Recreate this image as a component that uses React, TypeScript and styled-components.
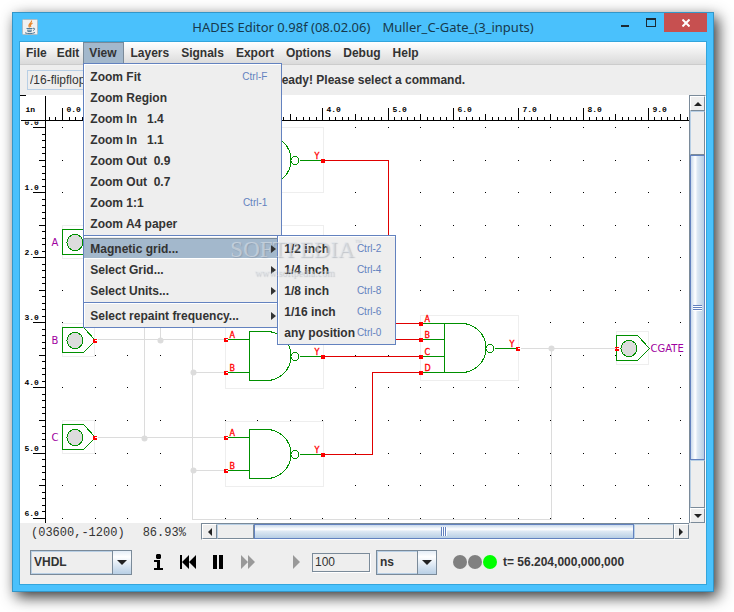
import React from "react";
import styled, { createGlobalStyle } from "styled-components";

const GlobalStyle = createGlobalStyle`
  * { box-sizing: border-box; }
  body { margin: 0; background: #fff; font-family: "Liberation Sans", Arial, sans-serif; font-size: 12px; color: #333; }
  button, input, select { font: inherit; color: inherit; margin: 0; padding: 0; border: 0; background: none; border-radius: 0; outline: none; }
`;

const BLUE = "#6382bf";
const STEEL = "#7a8a99";
const PALE = "#b8cfe5";
const GREEN = "#009000";
const RED = "#e00000";
const GREY = "#dcdcdc";

/* ---------- window frame ---------- */

const Desktop = styled.div`
  min-height: 100vh;
  display: flex;
  padding: 12px 20px 20px 12px;
  overflow: hidden;
`;

const Frame = styled.div`
  flex: 1;
  min-width: 0;
  display: flex;
  flex-direction: column;
  padding: 0 6px 6px;
  background: #4ac1fc;
  border: 1px solid #3396c8;
  box-shadow: 4px 5px 14px rgba(0, 0, 0, 0.8);
`;

const TitleBar = styled.header`
  height: 28px;
  display: grid;
  grid-template-columns: 1fr auto 1fr;
  align-items: center;
`;

const AppIcon = styled.svg`
  margin-left: 3px;
`;

const Title = styled.h1`
  margin: 0;
  display: flex;
  gap: 12px;
  font: 400 13px/28px "Noto Sans", "Open Sans", sans-serif;
  color: #17394c;
  white-space: nowrap;
`;

const WindowButtons = styled.div`
  align-self: start;
  justify-self: end;
  display: flex;
`;

const WindowButton = styled.button<{ $close?: boolean }>`
  width: ${(p) => (p.$close ? 43 : 26)}px;
  height: 19px;
  display: flex;
  align-items: center;
  justify-content: center;
  background: ${(p) => (p.$close ? "#c75050" : "transparent")};
`;

const Client = styled.div`
  flex: 1;
  min-height: 0;
  display: flex;
  flex-direction: column;
  background: #eee;
  border: 1px solid #33a5dc;
`;

/* ---------- menus ---------- */

const MenuBar = styled.nav`
  height: 23px;
  display: flex;
  border-bottom: 1px solid #ccc;
  background: linear-gradient(#fff, #dadada);
`;

const MenuSlot = styled.div`
  position: relative;
  display: flex;
`;

const MenuTitle = styled.button<{ $open?: boolean; $short?: boolean }>`
  height: 22px;
  padding: 0 ${(p) => (p.$open ? 8 : p.$short ? 4 : 6)}px 0 6px;
  font-weight: 700;
  line-height: 20px;
  background: ${(p) => (p.$open ? "#a3b8cc" : "transparent")};
  box-shadow: ${(p) => (p.$open ? `inset 1px 1px ${STEEL}, inset -1px 0 ${STEEL}` : "none")};
`;

const Popup = styled.div<{ $sub?: boolean }>`
  position: absolute;
  z-index: ${(p) => (p.$sub ? 3 : 2)};
  top: ${(p) => (p.$sub ? "-3px" : "21px")};
  left: ${(p) => (p.$sub ? "calc(100% - 4px)" : "0")};
  width: ${(p) => (p.$sub ? 119 : 199)}px;
  padding: 2px 0 1px;
  background: #eee;
  border: 1px solid ${BLUE};
  box-shadow: inset 1px 1px #fff;
`;

const ItemSlot = styled.div`
  position: relative;
`;

const Item = styled.button<{ $active?: boolean; $wide?: boolean }>`
  width: 100%;
  height: 21px;
  display: flex;
  align-items: center;
  justify-content: space-between;
  padding: 0 ${(p) => (p.$wide ? 5 : 14)}px 0 6px;
  font-weight: 700;
  text-align: left;
  white-space: pre;
  background: ${(p) => (p.$active ? "#a3b8cc" : "transparent")};
  border-top: 1px solid ${(p) => (p.$active ? STEEL : "transparent")};
  border-bottom: 1px solid ${(p) => (p.$active ? "#fff" : "transparent")};
`;

const Shortcut = styled.kbd`
  font: 400 10px "Liberation Sans", Arial, sans-serif;
  color: ${BLUE};
`;

const Separator = styled.hr`
  height: 2px;
  margin: 1px 0;
  border: 0;
  background: #fff;
  border-top: 1px solid ${BLUE};
`;

const Watermark = styled.div`
  position: absolute;
  z-index: 4;
  top: 194px;
  left: 147px;
  width: 132px;
  pointer-events: none;
  text-align: center;
  font-family: "Liberation Serif", serif;
  color: rgba(225, 230, 236, 0.55);
  text-shadow: 1px 1px 1px rgba(120, 130, 145, 0.4);
`;

const WatermarkName = styled.div`
  display: flex;
  font-size: 23px;
  line-height: 28px;
`;

const WatermarkMark = styled.sup`
  font-size: 7px;
  line-height: 12px;
`;

const WatermarkSite = styled.div`
  font-size: 10px;
  line-height: 18px;
  padding-right: 4px;
`;

/* ---------- tool bar ---------- */

const ToolBar = styled.div`
  height: 30px;
  display: flex;
  align-items: center;
  gap: 3px;
  padding: 0 7px;
`;

const PathField = styled.input`
  width: 243px;
  height: 20px;
  padding: 0 2px;
  border: 1px solid ${PALE};
`;

const Message = styled.output`
  font-weight: 700;
  white-space: nowrap;
`;

/* ---------- canvas and scroll bars ---------- */

const Workspace = styled.main`
  flex: 1;
  min-height: 300px;
  display: flex;
`;

const Drawing = styled.svg`
  flex: 1;
  min-width: 0;
  height: auto;
  background: #fff;
  overflow: hidden;
`;

const StatusRow = styled.div`
  height: 17px;
  display: flex;
  padding-right: 17px;
  font: 12px/20px "Liberation Mono", monospace;
`;

const Readout = styled.div`
  width: 181px;
  display: flex;
  gap: 18px;
  padding-left: 11px;
`;

const ScrollBar = styled.div<{ $vertical?: boolean }>`
  display: flex;
  flex-direction: ${(p) => (p.$vertical ? "column" : "row")};
  ${(p) =>
    p.$vertical
      ? `width: 17px; border-right: 1px solid #fff; border-left: 1px solid ${STEEL}; border-top: 1px solid ${STEEL};`
      : `flex: 1; min-width: 0; border-top: 1px solid ${STEEL}; border-left: 1px solid ${STEEL}; border-bottom: 1px solid #fff;`}
`;

const ScrollButton = styled.button`
  width: 15px;
  height: 15px;
  display: flex;
  align-items: center;
  justify-content: center;
  border: 1px solid ${STEEL};
  border-top-color: #fff;
  border-left-color: #fff;
`;

const Track = styled.div<{ $size: number }>`
  flex: ${(p) => p.$size} 1 0;
  border: 1px solid ${STEEL};
  border-top-color: ${PALE};
  border-left-color: ${PALE};
`;

const Thumb = styled.div<{ $size: number; $vertical?: boolean }>`
  flex: ${(p) => p.$size} 1 0;
  display: flex;
  align-items: center;
  justify-content: center;
  border: 1px solid ${BLUE};
  background: linear-gradient(
    ${(p) => (p.$vertical ? "to right" : "to bottom")},
    #c8d9ec, #fff 32%, #dde8f3 50%, #b8cfe5
  );
`;

const Grip = styled.span<{ $vertical?: boolean }>`
  width: ${(p) => (p.$vertical ? 9 : 6)}px;
  height: ${(p) => (p.$vertical ? 6 : 9)}px;
  background: repeating-linear-gradient(
    ${(p) => (p.$vertical ? "to bottom" : "to right")},
    ${BLUE} 0 1px, #fff 1px 2px
  );
`;

/* ---------- simulation controls ---------- */

const Controls = styled.footer`
  height: 44px;
  display: flex;
  align-items: center;
  padding-left: 10px;
`;

const Combo = styled.label<{ $width: number }>`
  width: ${(p) => p.$width}px;
  height: 25px;
  display: grid;
  grid-template: 100% / 1fr 19px;
  border: 1px solid ${STEEL};
  font-weight: 700;
`;

const ComboSelect = styled.select`
  grid-area: 1 / 1 / 2 / 3;
  appearance: none;
  padding: 0 2px;
  border: 1px solid ${PALE};
`;

const ComboArrow = styled.span`
  grid-area: 1 / 2;
  display: flex;
  align-items: center;
  justify-content: center;
  border-left: 1px solid ${STEEL};
  background: linear-gradient(#e4edf6, #fff 25%, #b8cfe5);
  pointer-events: none;
`;

const Transport = styled.div`
  display: flex;
  gap: 14px;
  margin: 0 8px 0 18px;
`;

const IconButton = styled.button<{ $spaced?: boolean }>`
  width: 16px;
  height: 18px;
  margin-left: ${(p) => (p.$spaced ? 18 : 0)}px;
  display: flex;
  align-items: center;
  justify-content: center;
`;

const StepField = styled.input`
  width: 58px;
  height: 19px;
  margin-right: 6px;
  padding: 0 2px;
  border: 1px solid ${STEEL};
  box-shadow: 1px 1px #fff;
`;

const Lights = styled.div`
  display: flex;
  gap: 1px;
  margin: 0 6px 0 16px;
`;

const Light = styled.span<{ $on?: boolean }>`
  width: 14px;
  height: 14px;
  border-radius: 50%;
  background: ${(p) => (p.$on ? "#00ff00" : "#808080")};
`;

const Clock = styled.output`
  font-weight: 700;
  white-space: nowrap;
`;

/* ---------- schematic ---------- */

const INCH = 65.1;
const range = (a: number, b: number) => Array.from({ length: b - a + 1 }, (_, i) => a + i);
const at = (origin: number, inches: number) => Math.round(origin + inches * INCH);

const RulerText = styled.text`
  font: 700 8px "Liberation Mono", monospace;
  fill: #000;
`;
const PinText = styled.text`
  font: 8px "DejaVu Sans", sans-serif;
  fill: #f00;
  stroke: #f00;
  stroke-width: 0.3px;
`;
const PortText = styled.text`
  font: 10px "DejaVu Sans", sans-serif;
  fill: #a000a0;
`;

const Pin = ({ x, y, driven }: { x: number; y: number; driven?: boolean }) => (
  <g>
    <rect x={x - 1.5} y={y - 1.5} width="4" height="4" fill="#f00" />
    {!driven && <rect x={x + 0.5} y={y - 0.5} width="2" height="1" fill="#fff" />}
  </g>
);

const Outline = ({ x, y, w, h }: { x: number; y: number; w: number; h: number }) => (
  <rect x={x} y={y} width={w} height={h} fill="#fff" stroke="#eee" />
);

const Port = ({ y, x = 62, label, output }: { y: number; x?: number; label: string; output?: boolean }) => (
  <g>
    <Outline x={x} y={y - 17} w={32} h={33} />
    <path d={`M${x} ${y - 13}h21l12 13l-12 12h-21z`} fill="none" stroke={GREEN} />
    <circle cx={x + 12.5} cy={y} r="8" fill={GREY} stroke={GREEN} />
    <Pin x={output ? x : x + 32} y={y} />
    <PortText x={output ? x + 34 : x - 11} y={y + 3}>{label}</PortText>
  </g>
);

const Gate = ({ y, x = 225, inputs, driven }: { y: number; x?: number; inputs: [string, number][]; driven?: boolean }) => (
  <g>
    <Outline x={x} y={y - 33} w={98} h={65} />
    <g fill="none" stroke={GREEN}>
      {inputs.map(([name, dy]) => (
        <path key={name} d={`M${x} ${y + dy}h24`} />
      ))}
      <path d={`M${x + 24} ${y - 25}h17a24.5 24.5 0 0 1 0 49h-17z`} />
      <circle cx={x + 69.5} cy={y} r="4" />
      <path d={`M${x + 74} ${y}h24`} />
    </g>
    {inputs.map(([name, dy]) => (
      <g key={name}>
        <Pin x={x} y={y + dy} driven={driven} />
        <PinText x={x + 4} y={y + dy - 2}>{name}</PinText>
      </g>
    ))}
    <Pin x={x + 97} y={y} driven={!driven} />
    <PinText x={x + 89} y={y - 2}>Y</PinText>
  </g>
);

const TWO: [string, number][] = [["A", -17], ["B", 16]];
const FOUR: [string, number][] = [["A", -25], ["B", -9], ["C", 8], ["D", 24]];

function Schematic() {
  return (
    <Drawing role="img" aria-label="Muller C-Gate schematic">
      <g transform="translate(-19.5 -94.5)" shapeRendering="crispEdges">
        {range(0, 24).map((i) =>
          range(0, 16).map((j) => (
            <rect key={`${i}-${j}`} x={at(62, i / 2) - 0.5} y={at(127, j / 2) - 0.5} width="1" height="1" fill="#000" />
          ))
        )}
        {[160, 258, 356, 454].map((y) => (
          <Gate key={y} y={y} inputs={TWO} />
        ))}
        <Gate x={420} y={348} inputs={FOUR} driven />
        <Port y={242} label="A" />
        <Port y={340} label="B" />
        <Port y={437} label="C" />
        <Port y={348} x={616} label="CGATE" output />
        <g fill="none" stroke={GREY}>
          <path d="M97 339H223M160 339V242M97 437H223M144 437V242" />
          <path d="M520 348H615M551 348V519H192V274M192 372H223M192 470H223" />
        </g>
        <g fill={GREY} shapeRendering="auto">
          {[[160, 340], [144, 438], [193, 372], [193, 470], [551, 348]].map(([x, y]) => (
            <circle key={`${x}-${y}`} cx={x} cy={y} r="3" />
          ))}
        </g>
        <g fill="none" stroke={RED}>
          <path d="M323 160H388V323H420M323 258H372V339H420M323 356H420M323 454H372V372H420" />
        </g>

        <rect x="19.5" y="94.5" width="26" height="2000" fill="#fff" />
        <g stroke="#000">
          <path d="M45 95V2000M20 120H3000M19.5 95H25" />
          {range(-2, 150).map((i) => {
            const len = i % 10 === 0 ? 13 : i % 5 === 0 ? 7 : 4;
            const x = at(62, i / 10);
            return <path key={i} d={`M${x} 120v-${len}`} />;
          })}
          {range(0, 100).map((i) => {
            const len = i % 10 === 0 ? 13 : i % 5 === 0 ? 7 : 4;
            const y = at(127, i / 10);
            return <path key={i} d={`M45 ${y}h-${len}`} />;
          })}
        </g>
        <RulerText x="25" y="111">in</RulerText>
        {range(0, 9).map((i) => (
          <RulerText key={i} x={at(66, i)} y="111">{`${i}.0`}</RulerText>
        ))}
        <clipPath id="side-ruler">
          <rect x="19" y="121" width="40" height="2000" />
        </clipPath>
        <g clipPath="url(#side-ruler)">
          {range(0, 6).map((i) => (
            <RulerText key={i} x="24" y={at(124, i)}>{`${i}.0`}</RulerText>
          ))}
        </g>
      </g>
    </Drawing>
  );
}

/* ---------- small icons ---------- */

const Triangle = ({ dir }: { dir: "up" | "down" | "left" | "right" }) => {
  const d = { up: "M0 6L4 2L8 6z", down: "M0 2L4 6L8 2z", left: "M6 0L2 4L6 8z", right: "M2 0L6 4L2 8z" }[dir];
  return (
    <svg width="8" height="8" viewBox="0 0 8 8" aria-hidden="true">
      <path d={d} fill="#222" />
    </svg>
  );
};

const MenuArrow = () => (
  <svg width="5" height="8" viewBox="0 0 5 8" aria-hidden="true">
    <path d="M0 0L5 4L0 8z" fill="#333" />
  </svg>
);

const ComboGlyph = () => (
  <svg width="10" height="5" viewBox="0 0 10 5" aria-hidden="true">
    <path d="M0 0H10L5 5z" fill="#222" />
  </svg>
);

const JavaIcon = () => (
  <AppIcon width="16" height="16" viewBox="0 0 16 16" aria-hidden="true">
    <rect x="0.5" y="0.5" width="15" height="15" rx="1" fill="#f1f1f1" stroke="#aebcc4" />
    <path d="M9.5 1.5C10.5 4 5 5 7.5 8.5M10.5 4C8 5.500 8 6.500 9 8" fill="none" stroke="#e8862c" strokeWidth="1.2" />
    <path d="M4.5 9.5H10.5M5 11.2H10M5.5 12.6H9.5M3 13.8C6 15 10 15 13 13.5M11 9.3C13.5 8.8 13 11 11 11.5" fill="none" stroke="#4d7896" />
  </AppIcon>
);

const MENUS = ["File", "Edit", "View", "Layers", "Signals", "Export", "Options", "Debug", "Help"];

const ZOOM_ITEMS: [string, string?][] = [
  ["Zoom Fit", "Ctrl-F"],
  ["Zoom Region"],
  ["Zoom In   1.4"],
  ["Zoom In   1.1"],
  ["Zoom Out  0.9"],
  ["Zoom Out  0.7"],
  ["Zoom 1:1", "Ctrl-1"],
  ["Zoom A4 paper"],
];

const GRID_ITEMS = [
  ["1/2 inch", "Ctrl-2"],
  ["1/4 inch", "Ctrl-4"],
  ["1/8 inch", "Ctrl-8"],
  ["1/16 inch", "Ctrl-6"],
  ["any position", "Ctrl-0"],
];

function ViewMenu() {
  return (
    <>
      <Popup role="menu" aria-label="View">
        {ZOOM_ITEMS.map(([text, key]) => (
          <Item key={text} role="menuitem">
            {text}
            {key && <Shortcut>{key}</Shortcut>}
          </Item>
        ))}
        <Separator />
        <ItemSlot>
          <Item role="menuitem" aria-haspopup="menu" aria-expanded="true" $active $wide>
            Magnetic grid...
            <MenuArrow />
          </Item>
          <Popup role="menu" aria-label="Magnetic grid" $sub>
            {GRID_ITEMS.map(([text, key]) => (
              <Item key={text} role="menuitem">
                {text}
                <Shortcut>{key}</Shortcut>
              </Item>
            ))}
          </Popup>
        </ItemSlot>
        <Item role="menuitem" aria-haspopup="menu" $wide>Select Grid...<MenuArrow /></Item>
        <Item role="menuitem" aria-haspopup="menu" $wide>Select Units...<MenuArrow /></Item>
        <Separator />
        <Item role="menuitem" aria-haspopup="menu" $wide>Select repaint frequency...<MenuArrow /></Item>
      </Popup>
      <Watermark aria-hidden="true">
        <WatermarkName>
          SOFTPEDIA<WatermarkMark>™</WatermarkMark>
        </WatermarkName>
        <WatermarkSite>www.softpedia.com</WatermarkSite>
      </Watermark>
    </>
  );
}

export default function App() {
  return (
    <Desktop>
      <GlobalStyle />
      <Frame>
        <TitleBar>
          <JavaIcon />
          <Title>
            <span>HADES Editor 0.98f (08.02.06)</span>
            <span>Muller_C-Gate_(3_inputs)</span>
          </Title>
          <WindowButtons>
            <WindowButton aria-label="Minimize">
              <svg width="10" height="10" viewBox="0 0 10 10"><path d="M1 7H9V9H1z" fill="#1c2a33" /></svg>
            </WindowButton>
            <WindowButton aria-label="Maximize">
              <svg width="10" height="9" viewBox="0 0 10 9"><path d="M0 0H10V9H0zM1 2V8H9V2z" fillRule="evenodd" fill="#1c2a33" /></svg>
            </WindowButton>
            <WindowButton aria-label="Close" $close>
              <svg width="8" height="8" viewBox="0 0 8 8"><path d="M0.5 0.5L7.5 7.5M7.5 0.5L0.5 7.5" stroke="#fff" strokeWidth="2" /></svg>
            </WindowButton>
          </WindowButtons>
        </TitleBar>
        <Client>
          <MenuBar aria-label="Main menu">
            {MENUS.map((name) => (
              <MenuSlot key={name}>
                <MenuTitle
                  aria-haspopup="menu"
                  $open={name === "View"}
                  $short={name === "File" || name === "Edit"}
                >
                  {name}
                </MenuTitle>
                {name === "View" && <ViewMenu />}
              </MenuSlot>
            ))}
          </MenuBar>
          <ToolBar>
            <PathField aria-label="Design path" defaultValue="/16-flipflop" />
            <Message>Ready! Please select a command.</Message>
          </ToolBar>
          <Workspace>
            <Schematic />
            <ScrollBar $vertical>
              <ScrollButton aria-label="Scroll up"><Triangle dir="up" /></ScrollButton>
              <Track $size={42} />
              <Thumb $size={307} $vertical><Grip $vertical /></Thumb>
              <Track $size={46} />
              <ScrollButton aria-label="Scroll down"><Triangle dir="down" /></ScrollButton>
            </ScrollBar>
          </Workspace>
          <StatusRow>
            <Readout>
              <span>(03600,-1200)</span>
              <span>86.93%</span>
            </Readout>
            <ScrollBar>
              <ScrollButton aria-label="Scroll left"><Triangle dir="left" /></ScrollButton>
              <Track $size={35} />
              <Thumb $size={383}><Grip /></Thumb>
              <Track $size={38} />
              <ScrollButton aria-label="Scroll right"><Triangle dir="right" /></ScrollButton>
            </ScrollBar>
          </StatusRow>
          <Controls>
            <Combo $width={102}>
              <ComboSelect aria-label="Simulation model" defaultValue="VHDL"><option>VHDL</option></ComboSelect>
              <ComboArrow><ComboGlyph /></ComboArrow>
            </Combo>
            <Transport>
              <IconButton aria-label="Information">
                <svg width="9" height="16" viewBox="0 0 9 16"><path d="M3 0H6L7 1V4L6 5H3L2 4V1zM0 6H6V14H9V16H0V14H3V8H0z" /></svg>
              </IconButton>
              <IconButton aria-label="Rewind">
                <svg width="16" height="14" viewBox="0 0 16 14"><path d="M0 0H2V14H0zM9 0V14L2 7zM16 0V14L9 7z" /></svg>
              </IconButton>
              <IconButton aria-label="Pause">
                <svg width="10" height="14" viewBox="0 0 10 14"><path d="M0 0H4V14H0zM6 0H10V14H6z" /></svg>
              </IconButton>
              <IconButton aria-label="Fast forward">
                <svg width="14" height="14" viewBox="0 0 14 14"><path d="M0 0L7 7L0 14zM7 0L14 7L7 14z" fill="#999" /></svg>
              </IconButton>
              <IconButton aria-label="Step" $spaced>
                <svg width="7" height="14" viewBox="0 0 7 14"><path d="M0 0L7 7L0 14z" fill="#999" /></svg>
              </IconButton>
            </Transport>
            <StepField aria-label="Step size" defaultValue="100" />
            <Combo $width={61}>
              <ComboSelect aria-label="Time unit" defaultValue="ns"><option>ns</option></ComboSelect>
              <ComboArrow><ComboGlyph /></ComboArrow>
            </Combo>
            <Lights>
              <Light />
              <Light />
              <Light $on />
            </Lights>
            <Clock>t= 56.204,000,000,000</Clock>
          </Controls>
        </Client>
      </Frame>
    </Desktop>
  );
}
